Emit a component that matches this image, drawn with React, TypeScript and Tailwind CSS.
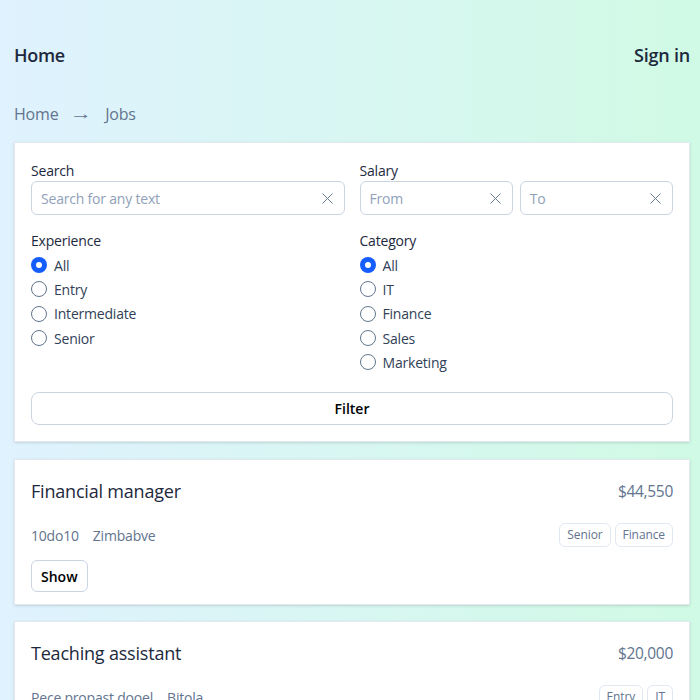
import { X } from 'lucide-react'

const EXPERIENCE = ['All', 'Entry', 'Intermediate', 'Senior']
const CATEGORIES = ['All', 'IT', 'Finance', 'Sales', 'Marketing']

const JOBS = [
    { title: 'Financial manager', salary: '$44,550', company: '10do10', city: 'Zimbabve', tags: ['Senior', 'Finance'] },
    { title: 'Teaching assistant', salary: '$20,000', company: 'Pece propast dooel', city: 'Bitola', tags: ['Entry', 'IT'] },
]

function ClearInput({ placeholder }: { placeholder: string }) {
    return (
        <div className="flex h-[34px] flex-1 items-center rounded-md border border-slate-300 bg-white pl-[9px] pr-[7px]">
            <span className="flex-1 text-[14px] tracking-[-0.2px] text-slate-400">{placeholder}</span>
            <X className="h-[19px] w-[19px] text-slate-500" strokeWidth={1.2} />
        </div>
    )
}

function Radio({ label, checked }: { label: string; checked?: boolean }) {
    return (
        <label className="flex h-[24.3px] items-center gap-[7px] text-[14px] tracking-[-0.2px] text-slate-700">
            {checked ? (
                <span className="flex h-[16px] w-[16px] items-center justify-center rounded-full bg-blue-600">
                    <span className="h-[6px] w-[6px] rounded-full bg-white" />
                </span>
            ) : (
                <span className="h-[16px] w-[16px] rounded-full border border-slate-500 bg-white" />
            )}
            {label}
        </label>
    )
}

export default function App() {
    return (
        <div className="min-h-[700px] bg-gradient-to-r from-sky-100 to-emerald-100 pb-8 pl-[14px] pr-[10px] font-['Open_Sans',sans-serif] text-slate-800">
            <header className="flex h-[111px] items-center justify-between pb-[1px]">
                <span className="text-[18px] font-semibold tracking-[-0.3px]">Home</span>
                <span className="text-[18px] font-semibold tracking-[-0.2px]">Sign in</span>
            </header>

            <nav className="mt-[-9px] flex h-6 items-center gap-[15px] text-[16px] tracking-[-0.2px] text-slate-500">
                <span>Home</span>
                <span className="inline-block scale-x-[1.4] font-['Liberation_Sans',sans-serif] text-[16px] leading-none">→</span>
                <span className="ml-[1px]">Jobs</span>
            </nav>

            {/* Filters */}
            <section className="mt-[16px] border border-slate-200 bg-white px-4 pb-4 pt-[17px] shadow-sm">
                <div className="grid grid-cols-2 gap-x-[15px]">
                    <div>
                        <p className="text-[14px] font-medium tracking-[-0.2px]">Search</p>
                        <ClearInput placeholder="Search for any text" />
                    </div>
                    <div>
                        <p className="text-[14px] font-medium tracking-[-0.2px]">Salary</p>
                        <div className="flex gap-[7px]">
                            <ClearInput placeholder="From" />
                            <ClearInput placeholder="To" />
                        </div>
                    </div>

                    <div className="mt-[15px]">
                        <p className="text-[14px] font-medium tracking-[-0.2px]">Experience</p>
                        <div className="mt-[2px]">
                            {EXPERIENCE.map((e, i) => (
                                <Radio key={e} label={e} checked={i === 0} />
                            ))}
                        </div>
                    </div>
                    <div className="mt-[15px]">
                        <p className="text-[14px] font-medium tracking-[-0.2px]">Category</p>
                        <div className="mt-[2px]">
                            {CATEGORIES.map((c, i) => (
                                <Radio key={c} label={c} checked={i === 0} />
                            ))}
                        </div>
                    </div>
                </div>

                <button className="mt-[18px] h-[33px] w-full rounded-lg border border-slate-300 text-[14px] font-semibold text-black">
                    Filter
                </button>
            </section>

            {/* Jobs */}
            <div className="mt-[17px] space-y-[16px]">
                {JOBS.map((job) => (
                    <article key={job.title} className="border border-slate-200 bg-white px-4 pb-[12px] pt-[18px] shadow-sm">
                        <div className="flex items-center justify-between">
                            <h3 className="text-[18px] font-medium tracking-[-0.2px]">{job.title}</h3>
                            <span className="text-[15.5px] tracking-[-0.3px] text-slate-500">{job.salary}</span>
                        </div>
                        <div className="mt-[18px] flex h-6 items-center justify-between">
                            <p className="flex gap-[14px] text-[14px] tracking-[-0.2px] text-slate-500">
                                <span>{job.company}</span>
                                <span>{job.city}</span>
                            </p>
                            <div className="flex gap-[4px]">
                                {job.tags.map((t) => (
                                    <span key={t} className="flex h-6 items-center rounded-md border border-slate-200 px-[7px] text-[12px] tracking-[-0.1px] text-slate-500">
                                        {t}
                                    </span>
                                ))}
                            </div>
                        </div>
                        <button className="mt-[13px] h-[32px] rounded-md border border-slate-300 px-[9px] text-[14px] font-semibold text-black">
                            Show
                        </button>
                    </article>
                ))}
            </div>
        </div>
    )
}
